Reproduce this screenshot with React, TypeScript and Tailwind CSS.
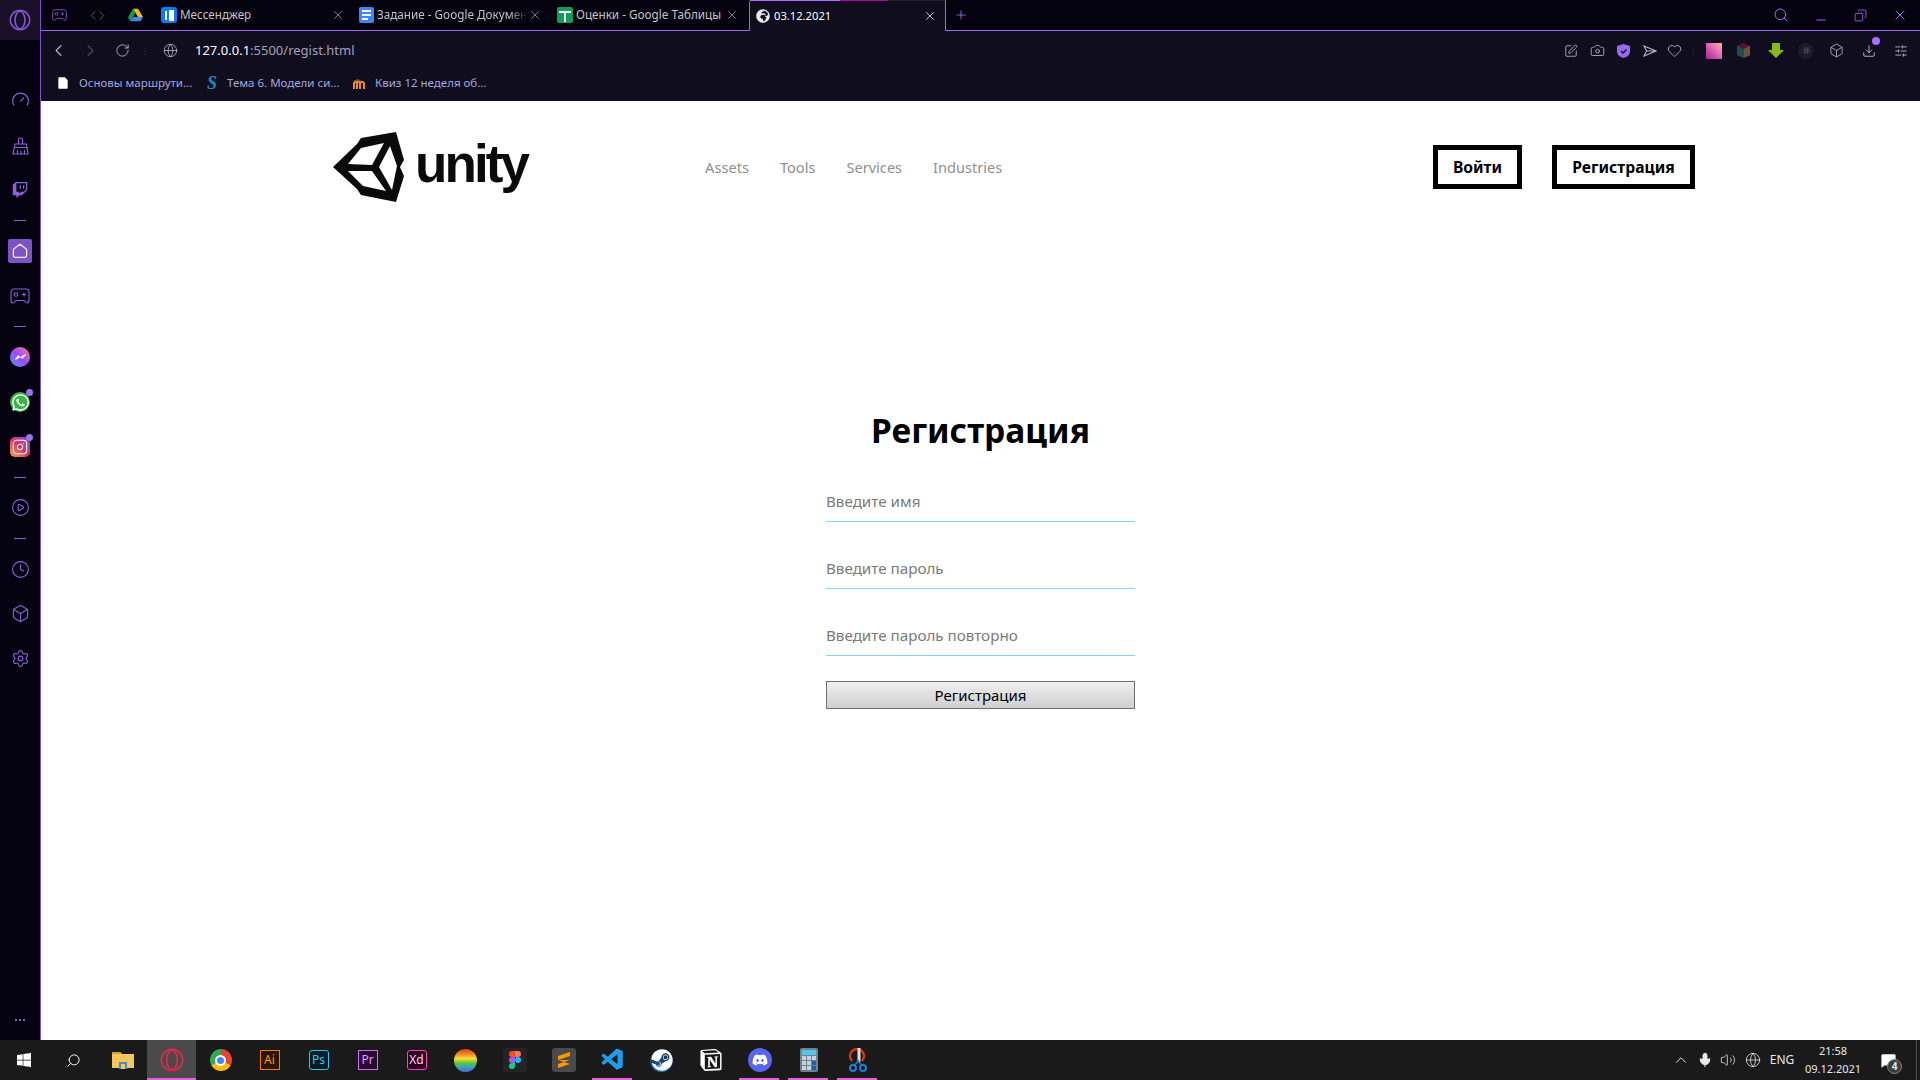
import React from "react";
import { ChevronLeft, ChevronRight, RotateCw, Globe, X, Plus, Search, Minus, Camera, Heart, Box, Download, SlidersHorizontal, Gauge, CirclePlay, Clock, Settings, ChevronUp, Mic, Volume2, MessageSquare, Copy, FileText, Instagram, Hash, SquarePen, Code } from "lucide-react";
import { FaTwitch, FaWhatsapp, FaWindows, FaSteam, FaDiscord, FaGlobeAfrica } from "react-icons/fa";
import { SiNotion } from "react-icons/si";
import { VscVscode } from "react-icons/vsc";

const ui = "font-['Noto_Sans','Open_Sans',sans-serif]";

function OperaMark({ color, w, h }: { color: string; w: number; h: number }) {
  return (
    <svg width={w} height={h} viewBox="0 0 24 24" fill="none" stroke={color} strokeWidth="1.7">
      <circle cx="12" cy="12" r="10.6" />
      <ellipse cx="12" cy="12" rx="5.4" ry="9.6" />
    </svg>
  );
}

function Controller({ size, color }: { size: number; color: string }) {
  return (
    <svg width={size} height={size * 0.8} viewBox="0 0 20 16" fill="none" stroke={color} strokeWidth="1.1">
      <path d="M4 1h12c2 0 3 1.500 3 3.500V12c0 2-1 3-2 3-1.500 0-2-2.500-3.500-2.500h-7C5 12.500 4.500 15 3 15c-1 0-2-1-2-3V4.500C1 2.500 2 1 4 1z" />
      <circle cx="6" cy="6.500" r="1.800" />
      <path d="M14 4.500v4M12 6.500h4" />
    </svg>
  );
}

function Drive() {
  return (
    <svg width="15" height="14" viewBox="0 0 24 22">
      <path d="M8 1h8l8 13h-8z" fill="#fbbc04" />
      <path d="M8 1L0 15l4 6 8-14z" fill="#0f9d58" />
      <path d="M4 21h16l4-7H8z" fill="#4285f4" />
    </svg>
  );
}

function Tab({ icon, label, wClass }: { icon: React.ReactNode; label: string; wClass: string }) {
  return (
    <div className="flex w-[198px] items-center pl-[7px]">
      {icon}
      <span className={`ml-[3px] overflow-hidden whitespace-nowrap text-[11.7px] text-[#c4c4c8] ${wClass}`}>{label}</span>
      <X size={14} strokeWidth={1.2} className="text-[#b0b0b4]" />
    </div>
  );
}

function SideIcon({ className, children }: { className: string; children: React.ReactNode }) {
  return <div className={`flex h-[24px] w-[40px] shrink-0 items-center justify-center ${className}`}>{children}</div>;
}

function Sep({ className }: { className: string }) {
  return (
    <div className={`flex h-[24px] w-[40px] shrink-0 items-center justify-center ${className}`}>
      <div className="h-[1px] w-[12px] bg-[#8a5fd8]" />
    </div>
  );
}

function Badge() {
  return <span className="absolute right-[-3px] top-[-3px] h-[7px] w-[7px] rounded-full bg-[#a070f0]" />;
}

function Sidebar() {
  const c = "text-[#8d60dc]";
  return (
    <aside className="flex h-full w-[41px] shrink-0 flex-col border-r border-[#7b52c9] bg-[#05030f]">
      <div className="flex h-[40px] w-[40px] shrink-0 items-center justify-center bg-[#1a1128]">
        <OperaMark color="#8458d4" w={22} h={22} />
      </div>
      <SideIcon className="mt-[47px]"><Gauge size={19} strokeWidth={1.5} className={c} /></SideIcon>
      <SideIcon className="mt-[23px]">
        <svg width="17" height="18" viewBox="0 0 17 18" fill="none" stroke="#8d60dc" strokeWidth="1.200">
          <path d="M6.500 7V2.500C6.500 1.500 7 1 8 1h1c1 0 1.500.5 1.500 1.500V7M3 7h11.500L16 17H1z" />
          <path d="M5.500 17v-4M9 17v-3M12.500 17v-4M2.500 10.500h12.500" />
        </svg>
      </SideIcon>
      <SideIcon className="mt-[20px]"><FaTwitch size={16} className={c} /></SideIcon>
      <Sep className="mt-[6px]" />
      <SideIcon className="mt-[7px]">
        <div className="flex h-[24px] w-[24px] items-center justify-center rounded-[2px] bg-[#7c55c4]">
          <svg width="16" height="16" viewBox="0 0 16 16" fill="none" stroke="#efe8fb" strokeWidth="1.300">
            <path d="M8 1.200l6 4.600c.4.3.6.7.6 1.200v5.500c0 1-.7 1.800-1.700 1.800H3.100c-1 0-1.700-.8-1.700-1.800V7c0-.5.2-.9.6-1.200z" />
          </svg>
        </div>
      </SideIcon>
      <SideIcon className="mt-[21px]"><Controller size={20} color="#8d60dc" /></SideIcon>
      <Sep className="mt-[6px]" />
      <SideIcon className="mt-[7px]">
        <div className="flex h-[20px] w-[20px] items-center justify-center rounded-full bg-gradient-to-tr from-[#1f8fff] via-[#a044ff] to-[#ff6968]">
          <svg width="13" height="8" viewBox="0 0 12 8"><path d="M0 7l3.600-5 2.400 2 3-2L12 1 8 6 5.800 4.200 3 6z" fill="#fff" /></svg>
        </div>
      </SideIcon>
      <SideIcon className="mt-[21px]">
        <div className="relative flex h-[20px] w-[20px] items-center justify-center rounded-full bg-[#3bb54a]">
          <FaWhatsapp size={19} className="text-white" />
          <Badge />
        </div>
      </SideIcon>
      <SideIcon className="mt-[21px]">
        <div className="relative flex h-[20px] w-[20px] items-center justify-center rounded-[5px] bg-gradient-to-tr from-[#f9a13a] via-[#dc2f68] to-[#5a45c8]">
          <Instagram size={16} strokeWidth={1.6} className="text-white" />
          <Badge />
        </div>
      </SideIcon>
      <Sep className="mt-[6px]" />
      <SideIcon className="mt-[6px]"><CirclePlay size={19} strokeWidth={1.4} className={c} /></SideIcon>
      <Sep className="mt-[7px]" />
      <SideIcon className="mt-[7px]"><Clock size={19} strokeWidth={1.4} className={c} /></SideIcon>
      <SideIcon className="mt-[20px]"><Box size={19} strokeWidth={1.4} className={c} /></SideIcon>
      <SideIcon className="mt-[21px]"><Settings size={19} strokeWidth={1.4} className={c} /></SideIcon>
      <div className="mb-[19px] mt-auto flex w-[40px] justify-center gap-[2px]">
        <span className="h-[2px] w-[2px] rounded-full bg-[#b08cf0]" />
        <span className="h-[2px] w-[2px] rounded-full bg-[#b08cf0]" />
        <span className="h-[2px] w-[2px] rounded-full bg-[#b08cf0]" />
      </div>
    </aside>
  );
}

function TabStrip() {
  const a = "text-[#a970ff]";
  return (
    <div className="flex h-[31px] shrink-0 border-b border-[#9a68ee] bg-[#05030f]">
      <div className="flex w-[37px] items-center justify-center"><Controller size={15} color="#8d60dc" /></div>
      <div className="flex w-[38px] items-center justify-center"><Code size={15} strokeWidth={1.4} className="text-[#2f8a3c]" /></div>
      <div className="flex w-[38px] items-center justify-center"><Drive /></div>
      <Tab
        wClass="w-[151px]"
        label="Мессенджер"
        icon={
          <div className="flex h-[16px] w-[16px] shrink-0 items-center justify-center rounded-[3px] bg-[#0b7cf5]">
            <span className="h-[9px] w-[2px] bg-white" />
            <span className="ml-[2px] h-[11px] w-[5px] bg-white" />
          </div>
        }
      />
      <Tab
        wClass="w-[151px] [mask-image:linear-gradient(to_right,black_88%,transparent)]"
        label="Задание - Google Документы"
        icon={
          <div className="flex h-[16px] w-[15px] shrink-0 flex-col justify-center gap-[2px] rounded-[2px] bg-[#4285f4] px-[3px]">
            <span className="h-[2px] bg-white" /><span className="h-[2px] bg-white" /><span className="h-[2px] w-[6px] bg-white" />
          </div>
        }
      />
      <div className="flex w-[199px] items-center pl-[7px]">
        <div className="relative flex h-[16px] w-[16px] shrink-0 items-center justify-center rounded-[2px] bg-[#0f9d58]">
          <span className="absolute top-[4px] h-[2px] w-[12px] bg-white" />
          <span className="absolute top-[4px] h-[11px] w-[2px] bg-white" />
        </div>
        <span className="ml-[3px] w-[149px] whitespace-nowrap text-[11.7px] text-[#c4c4c8]">Оценки - Google Таблицы</span>
        <X size={14} strokeWidth={1.2} className="text-[#b0b0b4]" />
      </div>
      <div className="flex h-[31px] w-[197px] shrink-0 flex-col rounded-tl-[3px] border-x border-[#9a68ee] bg-[#0f0d1e]">
        <div className="flex h-[1px] w-full shrink-0">
          <span className="w-[90px] bg-[#a970ff]" />
          <span className="w-[48px] bg-[#b0089a]" />
          <span className="flex-1 bg-[#222]" />
        </div>
        <div className="flex flex-1 items-center pl-[6px]">
          <FaGlobeAfrica size={14} className="shrink-0 text-[#e8e8ee]" />
          <span className="ml-[4px] w-[149px] text-[11.2px] text-white">03.12.2021</span>
          <X size={14} strokeWidth={1.4} className="text-[#e8e8ee]" />
        </div>
      </div>
      <div className="ml-[8px] flex items-center"><Plus size={14} strokeWidth={1.4} className={a} /></div>
      <div className="ml-auto flex items-center pr-[12px]">
        <Search size={16} strokeWidth={1.5} className={`-translate-x-[1px] ${a}`} />
        <Minus size={14} strokeWidth={1.5} className={`ml-[24px] mt-[10px] ${a}`} />
        <Copy size={13} strokeWidth={1.5} className={`ml-[26px] -scale-x-100 ${a}`} />
        <X size={16} strokeWidth={1.4} className={`ml-[25px] ${a}`} />
      </div>
    </div>
  );
}

function Slot({ className, children }: { className: string; children: React.ReactNode }) {
  return <div className={`relative flex shrink-0 items-center justify-center ${className}`}>{children}</div>;
}

function Toolbar() {
  const g = "text-[#b5b1cd]";
  return (
    <div className="flex h-[70px] shrink-0 flex-col bg-[#0f0d1e]">
      <div className="flex h-[39px] items-center">
        <Slot className="ml-[5px] w-[24px]"><ChevronLeft size={19} strokeWidth={1.5} className={g} /></Slot>
        <Slot className="ml-[8px] w-[24px]"><ChevronRight size={19} strokeWidth={1.5} className="text-[#4b4860]" /></Slot>
        <Slot className="ml-[8px] w-[24px]"><RotateCw size={15} strokeWidth={1.5} className={g} /></Slot>
        <Slot className="ml-[10px] w-[2px]"><span className="text-[8px] leading-[3px] text-[#3c3a4e]">⋮</span></Slot>
        <Slot className="ml-[16px] w-[16px]"><Globe size={15} strokeWidth={1.3} className={g} /></Slot>
        <div className="ml-[17px] whitespace-nowrap text-[13px] text-[#a5a1bd]"><span className="text-white">127.0.0.1</span>:5500/regist.html</div>
        <div className="ml-auto flex items-center pr-[3px]">
          <Slot className="w-[26px]"><SquarePen size={14} strokeWidth={1.5} className={g} /></Slot>
          <Slot className="w-[26px]"><Camera size={15} strokeWidth={1.4} className={g} /></Slot>
          <Slot className="w-[27px]">
            <svg width="13" height="14" viewBox="0 0 13 14"><path d="M6.500 0L13 2v5c0 4-3 6-6.500 7C3 13 0 11 0 7V2z" fill="#9a68ee" /><path d="M4 7l2 2 3.500-3.500" stroke="#0f0d1e" strokeWidth="1.400" fill="none" /></svg>
          </Slot>
          <Slot className="w-[26px]">
            <svg width="14" height="12" viewBox="0 0 14 12" fill="none" stroke="#b5b1cd" strokeWidth="1.100"><path d="M1 1l12 5-12 5 2.500-5zM3.500 6H13" /></svg>
          </Slot>
          <Slot className="w-[22px]"><Heart size={15} strokeWidth={1.4} className={g} /></Slot>
          <Slot className="w-[16px]"><span className="text-[8px] leading-[3px] text-[#3c3a4e]">⋮</span></Slot>
          <Slot className="w-[26px]"><span className="h-[16px] w-[16px] bg-gradient-to-tr from-[#a02090] via-[#e060b0] to-[#ffb0a0]" /></Slot>
          <Slot className="w-[33px]">
            <svg width="15" height="15" viewBox="0 0 16 16"><path d="M8 0l7 3-7 3-7-3z" fill="#5c1030" /><path d="M1 3l7 3v10l-7-3z" fill="#20504c" /><path d="M15 3l-7 3v10l7-3z" fill="#6a5238" /></svg>
          </Slot>
          <Slot className="w-[31px]">
            <svg width="16" height="15" viewBox="0 0 16 15"><path d="M4 0h8v7h4l-8 8-8-8h4z" fill="#84bd1a" /></svg>
          </Slot>
          <Slot className="w-[30px]">
            <span className="flex h-[16px] w-[16px] items-center justify-center rounded-full bg-[#1c1b28]"><Hash size={9} strokeWidth={2} className="text-[#54535e]" /></span>
          </Slot>
          <Slot className="w-[31px]"><Box size={15} strokeWidth={1.4} className={g} /></Slot>
          <Slot className="w-[33px]">
            <Download size={14} strokeWidth={1.4} className="text-[#d0cde2]" />
            <span className="absolute left-[20px] top-[-7px] h-[8px] w-[8px] rounded-full bg-[#a970ff]" />
          </Slot>
          <Slot className="w-[32px]"><SlidersHorizontal size={14} strokeWidth={1.4} className="text-[#d0cde2]" /></Slot>
        </div>
      </div>
      <div className="flex h-[26px] items-center whitespace-nowrap text-[11.5px] text-[#a4a8de]">
        <FileText size={14} strokeWidth={0} fill="#ffffff" className="ml-[15px] shrink-0" />
        <span className="ml-[9px] w-[111px]">Основы маршрути...</span>
        <span className="ml-[17px] w-[10px] font-['Liberation_Serif',serif] text-[18px] font-bold italic leading-none text-[#1a8fc4]">S</span>
        <span className="ml-[10px] w-[111px]">Тема 6. Модели си...</span>
        <svg className="ml-[14px] shrink-0" width="14" height="11" viewBox="0 0 14 11"><path d="M1 3l5-2 4 2H1z" fill="#555" /><path d="M2 11V5c2-2 3-1 3 0v6M5 5c1-2 3-1 3 0v6M8 5c2-2 4-1 4 1v5" stroke="#f08a1d" strokeWidth="2" fill="none" /></svg>
        <span className="ml-[9px] w-[111px]">Квиз 12 неделя об...</span>
      </div>
    </div>
  );
}

function UnityLogo() {
  return (
    <div className="flex items-start">
      <svg width="72" height="70" viewBox="0 0 72 70" className="shrink-0">
        <path d="M0 35L24 12L28 6L63 0L71 28L67 35L71 44L63 70L28 63L24 57Z" fill="#0a0a0a" />
        <path d="M15 32L28 16L51 11L39 33Z" fill="#fff" />
        <path d="M15 39L39 39L53 59L30 54Z" fill="#fff" />
        <path d="M57 14L64 34L59 58L46 35Z" fill="#fff" />
      </svg>
      <span className="ml-[10px] mt-[-3px] font-['Liberation_Sans',sans-serif] text-[53px] font-bold leading-[70px] tracking-[-2.9px] text-[#0a0a0a]">unity</span>
    </div>
  );
}

function PageHeader() {
  return (
    <header className="flex h-[132px] items-center pl-[292px] pr-[225px]">
      <UnityLogo />
      <nav className="ml-[178px] flex items-center gap-[31px] pt-[1px] text-[14.6px] text-[#8f8f8f]">
        <span>Assets</span>
        <span>Tools</span>
        <span>Services</span>
        <span>Industries</span>
      </nav>
      <div className="ml-auto flex items-center gap-[30px] text-[15.7px] font-bold text-black">
        <div className="flex h-[44px] w-[89px] items-center justify-center border-[5px] border-black pt-[1px]">Войти</div>
        <div className="flex h-[44px] w-[143px] items-center justify-center border-[5px] border-black pt-[1px]">Регистрация</div>
      </div>
    </header>
  );
}

function Field({ placeholder }: { placeholder: string }) {
  return (
    <input
      readOnly
      placeholder={placeholder}
      className="h-[34px] w-[309px] border-b border-[#80d4ff] pb-[7px] text-[15.2px] text-black outline-none placeholder:text-[#7a7a7a]"
    />
  );
}

function RegisterForm() {
  return (
    <main className="mt-[171px] flex flex-col items-center">
      <h1 className="text-[33.500px] font-bold leading-[52px] text-black">Регистрация</h1>
      <div className="mt-[32px] flex w-[309px] flex-col gap-[33px]">
        <Field placeholder="Введите имя" />
        <Field placeholder="Введите пароль" />
        <Field placeholder="Введите пароль повторно" />
      </div>
      <button className="mt-[25px] h-[28px] w-[309px] border border-[#707070] bg-gradient-to-b from-[#efefef] to-[#cfcfcf] text-[15px] text-black">
        Регистрация
      </button>
    </main>
  );
}

function TaskSlot({ children, on, className }: { children: React.ReactNode; on?: boolean; className?: string }) {
  return (
    <div className={`relative flex h-[40px] w-[49px] shrink-0 items-center justify-center ${className ?? ""}`}>
      {children}
      {on && <span className="absolute bottom-0 left-[4px] right-[5px] h-[2px] bg-[#e85fd8]" />}
    </div>
  );
}

function AppTile({ t, fg, bg, bd }: { t: string; fg: string; bg: string; bd: string }) {
  return <div className={`flex h-[20px] w-[20px] items-center justify-center border text-[12px] leading-none ${fg} ${bg} ${bd}`}>{t}</div>;
}

function Taskbar() {
  return (
    <footer className="flex h-[40px] w-[1920px] shrink-0 items-center bg-[#1a1a1a] text-white">
      <div className="flex w-[48px] items-center justify-center"><FaWindows size={16} /></div>
      <div className="flex w-[50px] items-center justify-center"><Search size={15} strokeWidth={1.5} className="-scale-x-100" /></div>
      <TaskSlot>
        <svg width="22" height="18" viewBox="0 0 22 18"><path d="M0 1h8l2 2h12v14H0z" fill="#f5c75a" /><path d="M0 1h8l2 2H0z" fill="#d9a22e" /><path d="M7 11h8v7H7z" fill="#3d8fd8" /><path d="M9 13h4v5H9z" fill="#f5c75a" /></svg>
      </TaskSlot>
      <TaskSlot className="bg-[#4a4a4a]">
        <OperaMark color="#e0264f" w={24} h={24} />
        <span className="absolute bottom-0 left-0 right-0 h-[2px] bg-[#e85fd8]" />
      </TaskSlot>
      <TaskSlot>
        <div className="flex h-[22px] w-[22px] items-center justify-center rounded-full bg-[conic-gradient(#ea4335_0_120deg,#fbbc04_120deg_240deg,#34a853_240deg_360deg)]">
          <span className="h-[11px] w-[11px] rounded-full border-2 border-white bg-[#4285f4]" />
        </div>
      </TaskSlot>
      <TaskSlot><AppTile t="Ai" fg="text-[#ff9a00]" bg="bg-[#2b1500]" bd="border-[#ff7c00]" /></TaskSlot>
      <TaskSlot><AppTile t="Ps" fg="text-[#31c5f0]" bg="bg-[#001d26]" bd="border-[#31c5f0] rounded-[3px]" /></TaskSlot>
      <TaskSlot><AppTile t="Pr" fg="text-[#e79bff]" bg="bg-[#2a0a34]" bd="border-[#d070e8]" /></TaskSlot>
      <TaskSlot><AppTile t="Xd" fg="text-[#ffd2ee]" bg="bg-[#2e0020]" bd="border-[#ff3ec8] rounded-[3px]" /></TaskSlot>
      <TaskSlot><span className="h-[23px] w-[23px] rounded-full bg-[linear-gradient(to_bottom,#e8352c_0%,#f08a24_22%,#f5e03a_42%,#5cc13a_62%,#2fa0d0_82%,#6a4fc0_100%)]" /></TaskSlot>
      <TaskSlot>
        <div className="flex h-[24px] w-[24px] items-center justify-center rounded-[3px] bg-[#242424]">
          <svg width="12" height="18" viewBox="0 0 12 18"><path d="M0 3a3 3 0 013-3h3v6H3a3 3 0 01-3-3z" fill="#f24e1e" /><path d="M6 0h3a3 3 0 010 6H6z" fill="#ff7262" /><path d="M0 9a3 3 0 013-3h3v6H3a3 3 0 01-3-3z" fill="#a259ff" /><circle cx="9" cy="9" r="3" fill="#1abcfe" /><path d="M0 15a3 3 0 013-3h3v3a3 3 0 01-6 0z" fill="#0acf83" /></svg>
        </div>
      </TaskSlot>
      <TaskSlot>
        <div className="flex h-[24px] w-[24px] items-center justify-center rounded-[3px] bg-[#4a4a4a]">
          <svg width="12" height="16" viewBox="0 0 12 16"><path d="M12 0v4L0 8V4zM0 8l12 4v-4zM12 8v4L0 16v-4z" fill="#ff9800" /></svg>
        </div>
      </TaskSlot>
      <TaskSlot on><VscVscode size={26} className="text-[#1f9cf0]" /></TaskSlot>
      <TaskSlot>
        <div className="flex h-[23px] w-[23px] items-center justify-center rounded-full bg-gradient-to-b from-[#0f1b3c] to-[#1b6fa8]"><FaSteam size={22} className="text-white" /></div>
      </TaskSlot>
      <TaskSlot><SiNotion size={22} className="text-white" /></TaskSlot>
      <TaskSlot on>
        <div className="flex h-[24px] w-[24px] items-center justify-center rounded-full bg-[#5865f2]"><FaDiscord size={16} className="text-white" /></div>
      </TaskSlot>
      <TaskSlot on>
        <div className="flex h-[24px] w-[18px] flex-col gap-[1px] rounded-[2px] bg-[#70808e] p-[2px]">
          <span className="h-[5px] bg-[#4ec8ee]" />
          <div className="grid flex-1 grid-cols-3 gap-[1px]">
            <span className="bg-[#c8d2da]" /><span className="bg-[#c8d2da]" /><span className="bg-[#c8d2da]" />
            <span className="bg-[#c8d2da]" /><span className="bg-[#c8d2da]" /><span className="bg-[#1a5fa8]" />
            <span className="bg-[#c8d2da]" /><span className="bg-[#c8d2da]" /><span className="bg-[#1a5fa8]" />
          </div>
        </div>
      </TaskSlot>
      <TaskSlot on>
        <svg width="20" height="24" viewBox="0 0 20 24" fill="none"><path d="M4 13a7 7 0 1110 0" stroke="#d6361c" strokeWidth="2.400" /><path d="M11 0v14" stroke="#e0e0e0" strokeWidth="3" /><circle cx="5" cy="20" r="3" stroke="#1f7fd8" strokeWidth="2" /><circle cx="15" cy="20" r="3" stroke="#1f7fd8" strokeWidth="2" /><path d="M6 18l5-6M14 18l-5-6" stroke="#1f7fd8" strokeWidth="1.500" /></svg>
      </TaskSlot>
      <div className="ml-auto flex h-[40px] items-center text-[12px] text-[#e8e8e8]">
        <div className="flex w-[24px] justify-center"><ChevronUp size={18} strokeWidth={1.3} /></div>
        <div className="flex w-[23px] justify-center"><Mic size={16} strokeWidth={1.5} fill="#e8e8e8" /></div>
        <div className="flex w-[24px] justify-center"><Volume2 size={16} strokeWidth={1.2} /></div>
        <div className="flex w-[26px] justify-center"><Globe size={16} strokeWidth={1.2} /></div>
        <div className="flex w-[32px] justify-center">ENG</div>
        <div className="flex w-[70px] flex-col items-center text-[11px] leading-[18px]"><span>21:58</span><span>09.12.2021</span></div>
        <div className="relative flex w-[40px] justify-center">
          <MessageSquare size={17} strokeWidth={0} fill="#ffffff" />
          <span className="absolute left-[19px] top-[7px] flex h-[15px] w-[15px] items-center justify-center rounded-full border border-[#888] bg-[#3c3c3c] text-[10px] font-bold">4</span>
        </div>
        <div className="ml-[8px] mr-[3px] h-[40px] w-[1px] bg-[#4d4d4d]" />
      </div>
    </footer>
  );
}

export default function App() {
  return (
    <div className={`flex h-[1080px] w-[1920px] flex-col overflow-hidden bg-white ${ui}`}>
      <div className="flex h-[1040px] shrink-0">
        <Sidebar />
        <div className="flex min-w-0 flex-1 flex-col">
          <TabStrip />
          <Toolbar />
          <div className="flex-1 bg-white">
            <PageHeader />
            <RegisterForm />
          </div>
        </div>
      </div>
      <Taskbar />
    </div>
  );
}
